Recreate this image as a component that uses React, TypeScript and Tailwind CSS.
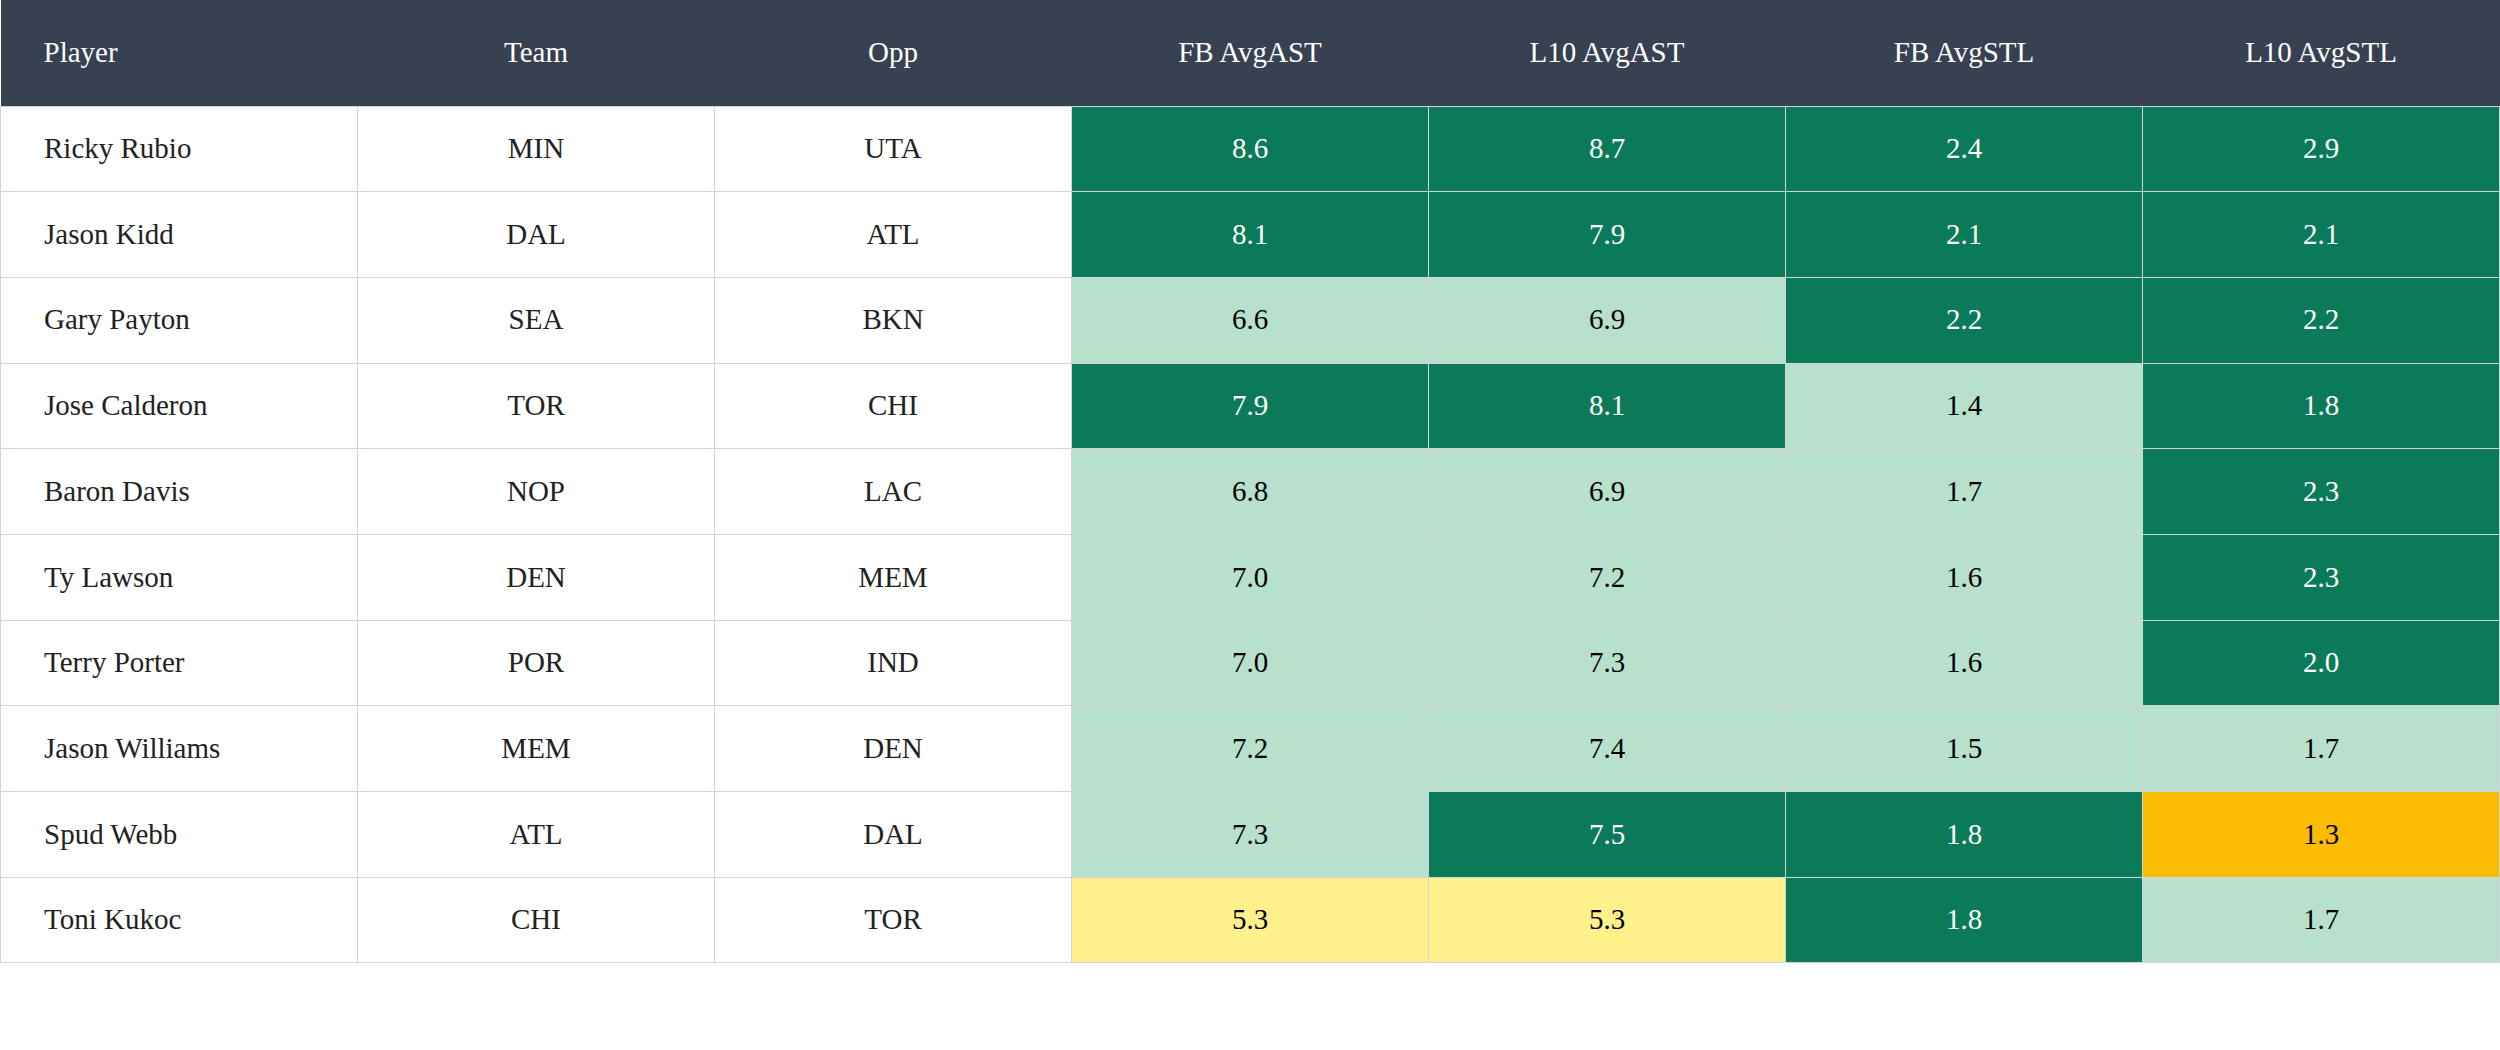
import React from 'react';

type Tone = 'dark' | 'light' | 'yellow' | 'amber';

const toneClassNames: Record<Tone, string> = {
  dark: 'bg-[#0b7a59] text-white',
  light: 'bg-[#b7e1cd] text-black',
  yellow: 'bg-[#fef08a] text-black',
  amber: 'bg-[#fbbc04] text-black',
};

const rows: [string, string, string, [string, Tone][]][] = [
  ['Ricky Rubio', 'MIN', 'UTA', [['8.6', 'dark'], ['8.7', 'dark'], ['2.4', 'dark'], ['2.9', 'dark']]],
  ['Jason Kidd', 'DAL', 'ATL', [['8.1', 'dark'], ['7.9', 'dark'], ['2.1', 'dark'], ['2.1', 'dark']]],
  ['Gary Payton', 'SEA', 'BKN', [['6.6', 'light'], ['6.9', 'light'], ['2.2', 'dark'], ['2.2', 'dark']]],
  ['Jose Calderon', 'TOR', 'CHI', [['7.9', 'dark'], ['8.1', 'dark'], ['1.4', 'light'], ['1.8', 'dark']]],
  ['Baron Davis', 'NOP', 'LAC', [['6.8', 'light'], ['6.9', 'light'], ['1.7', 'light'], ['2.3', 'dark']]],
  ['Ty Lawson', 'DEN', 'MEM', [['7.0', 'light'], ['7.2', 'light'], ['1.6', 'light'], ['2.3', 'dark']]],
  ['Terry Porter', 'POR', 'IND', [['7.0', 'light'], ['7.3', 'light'], ['1.6', 'light'], ['2.0', 'dark']]],
  ['Jason Williams', 'MEM', 'DEN', [['7.2', 'light'], ['7.4', 'light'], ['1.5', 'light'], ['1.7', 'light']]],
  ['Spud Webb', 'ATL', 'DAL', [['7.3', 'light'], ['7.5', 'dark'], ['1.8', 'dark'], ['1.3', 'amber']]],
  ['Toni Kukoc', 'CHI', 'TOR', [['5.3', 'yellow'], ['5.3', 'yellow'], ['1.8', 'dark'], ['1.7', 'light']]],
];

const headers = ['Player', 'Team', 'Opp', 'FB AvgAST', 'L10 AvgAST', 'FB AvgSTL', 'L10 AvgSTL'];

export default function App() {
  return (
    <div className="w-[2500px] h-[1050px] bg-white font-['Liberation_Serif',serif] text-[29px]">
      <table className="w-full table-fixed border-collapse">
        <thead>
          <tr className="h-[106px] bg-[#374151] text-white">
            {headers.map((h, i) => (
              <th
                key={h}
                className={i === 0 ? 'text-left font-normal pl-[43px]' : 'text-center font-normal'}
              >
                {h}
              </th>
            ))}
          </tr>
        </thead>
        <tbody>
          {rows.map(([name, team, opp, stats]) => (
            <tr key={name} className="h-[85.7px]">
              <td className="border border-[#d1d5db] pl-[43px] text-[#222]">{name}</td>
              <td className="border border-[#d1d5db] text-center text-[#222]">{team}</td>
              <td className="border border-[#d1d5db] text-center text-[#222]">{opp}</td>
              {stats.map(([v, tone], i) => (
                <td key={i} className={`border border-[#d1d5db] text-center ${toneClassNames[tone]}`}>
                  {v}
                </td>
              ))}
            </tr>
          ))}
        </tbody>
      </table>
    </div>
  );
}
